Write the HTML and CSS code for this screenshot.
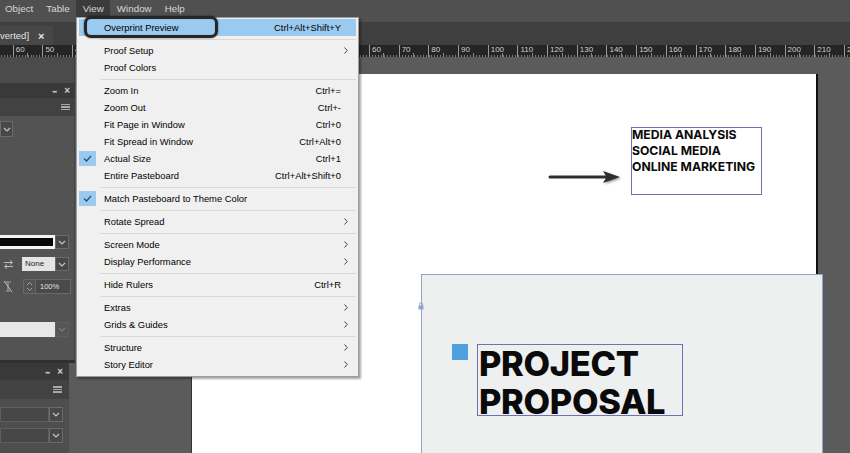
FILE: index.html
```html
<!DOCTYPE html>
<html>
<head>
<meta charset="utf-8">
<title>View menu</title>
<link rel="stylesheet" href="styles.css">
</head>
<body>
<div class="app">
  <div class="menubar">
    <span class="mb-item">Object</span>
    <span class="mb-item">Table</span>
    <span class="mb-item active">View</span>
    <span class="mb-item">Window</span>
    <span class="mb-item">Help</span>
  </div>
  <div class="tabbar">
    <div class="doc-tab"><span class="doc-title">verted]</span><span class="doc-close">×</span></div>
  </div>
  <div class="ruler">
    <div class="ruler-track">
      <span class="rc"></span><span class="rc">60</span><span class="rc">50</span><span class="rc">40</span><span class="rc"></span><span class="rc"></span><span class="rc"></span><span class="rc"></span><span class="rc"></span><span class="rc"></span><span class="rc"></span><span class="rc"></span><span class="rc"></span><span class="rc">60</span><span class="rc">70</span><span class="rc">80</span><span class="rc">90</span><span class="rc">100</span><span class="rc">110</span><span class="rc">120</span><span class="rc">130</span><span class="rc">140</span><span class="rc">150</span><span class="rc">160</span><span class="rc">170</span><span class="rc">180</span><span class="rc">190</span><span class="rc">200</span><span class="rc">210</span><span class="rc">2</span>
    </div>
  </div>
  <div class="main">
    <aside class="panels">
      <div class="dock-strip"></div>
      <div class="panel-head">
        <span class="ph-collapse">◂◂</span><span class="ph-close">×</span>
      </div>
      <div class="panel-tabs"><span class="hamburger"><i></i><i></i><i></i></span></div>
      <div class="panel-body">
        <div class="row row1">
          <span class="chev-box"><svg width="8" height="5" viewBox="0 0 8 5"><path d="M1 1 L4 4 L7 1" fill="none" stroke="#c8c8c8" stroke-width="1.1"/></svg></span>
        </div>
        <div class="row rowA">
          <span class="stroke-field"><span class="stroke-bar"></span></span>
          <span class="chev-box"><svg width="8" height="5" viewBox="0 0 8 5"><path d="M1 1 L4 4 L7 1" fill="none" stroke="#c8c8c8" stroke-width="1.1"/></svg></span>
        </div>
        <div class="row rowB">
          <span class="ico"><svg width="11" height="9" viewBox="0 0 11 9"><path d="M1 2.5 H9 M7 0.5 L9.5 2.5 L7 4.5 M10 6.5 H2 M4 4.5 L1.5 6.5 L4 8.5" fill="none" stroke="#bdbdbd" stroke-width="1"/></svg></span>
          <span class="none-field">None</span>
          <span class="chev-box"><svg width="8" height="5" viewBox="0 0 8 5"><path d="M1 1 L4 4 L7 1" fill="none" stroke="#c8c8c8" stroke-width="1.1"/></svg></span>
        </div>
        <div class="row rowC">
          <span class="ico"><svg width="10" height="13" viewBox="0 0 10 13"><path d="M2 2 H8 M5 2 V11 M3 11 H7" fill="none" stroke="#9e9e9e" stroke-width="1.2"/><path d="M1 1 L9 12" stroke="#bdbdbd" stroke-width="1"/></svg></span>
          <span class="spin"><svg width="7" height="11" viewBox="0 0 7 11"><path d="M1 4 L3.5 1.5 L6 4 M1 7 L3.5 9.5 L6 7" fill="none" stroke="#aaa" stroke-width="0.9"/></svg></span>
          <span class="pct-field">100%</span>
        </div>
        <div class="row rowD">
          <span class="light-field"></span>
          <span class="chev-box dim"><svg width="8" height="5" viewBox="0 0 8 5"><path d="M1 1 L4 4 L7 1" fill="none" stroke="#7c7c7c" stroke-width="1.1"/></svg></span>
        </div>
      </div>
      <div class="panel-sep"></div>
      <div class="lower">
        <div class="lower-panel">
          <div class="panel-head lower-head">
            <span class="ph-collapse">◂◂</span><span class="ph-close">×</span>
          </div>
          <div class="panel-tabs lower-tabs"><span class="hamburger"><i></i><i></i><i></i></span></div>
          <div class="lower-body">
            <div class="lrow"><span class="dark-field"></span><span class="chev-box"><svg width="8" height="5" viewBox="0 0 8 5"><path d="M1 1 L4 4 L7 1" fill="none" stroke="#c8c8c8" stroke-width="1.1"/></svg></span></div>
            <div class="lrow"><span class="dark-field"></span><span class="chev-box"><svg width="8" height="5" viewBox="0 0 8 5"><path d="M1 1 L4 4 L7 1" fill="none" stroke="#c8c8c8" stroke-width="1.1"/></svg></span></div>
          </div>
        </div>
      </div>
    </aside>
    <div class="canvas">
      <div class="page"></div>
      <div class="bg-rect"></div>
      <svg class="lock" width="6" height="8" viewBox="0 0 6 8"><path d="M1.5 3.5 V2.2 A1.5 1.5 0 0 1 4.5 2.2 V3.5" fill="none" stroke="#8ea4cc" stroke-width="0.9"/><rect x="0.5" y="3.5" width="5" height="4" fill="#8ea4cc"/></svg>
      <div class="blue-square"></div>
      <div class="frame frame-title"><p>PROJECT</p><p>PROPOSAL</p></div>
      <div class="frame frame-list"><p>MEDIA ANALYSIS</p><p>SOCIAL MEDIA</p><p>ONLINE MARKETING</p></div>
      <svg class="arrow" width="76" height="16" viewBox="0 0 76 16">
        <defs><filter id="blur" x="-10%" y="-50%" width="120%" height="200%"><feGaussianBlur stdDeviation="1"/></filter></defs>
        <path d="M3 9.5 H64" stroke="#9a9a9a" stroke-width="4" stroke-linecap="round" filter="url(#blur)"/>
        <path d="M58 3.5 L74 9.5 L58 15 L61 9.5 Z" fill="#9a9a9a" filter="url(#blur)"/>
        <path d="M3 8 H62" stroke="#2e2e2e" stroke-width="3" stroke-linecap="round"/>
        <path d="M56 2 L73 8 L56 14 L59.5 8 Z" fill="#2e2e2e"/>
      </svg>
    </div>
  </div>

  <div class="view-menu">
    <div class="mi hl"><span class="ck"></span><span class="lbl">Overprint Preview</span><span class="sc">Ctrl+Alt+Shift+Y</span><span class="sub"></span></div>
    <div class="sep"></div>
    <div class="mi"><span class="ck"></span><span class="lbl">Proof Setup</span><span class="sc"></span><span class="sub"><svg width="4" height="7" viewBox="0 0 4 7"><path d="M0.5 0.5 L3.3 3.5 L0.5 6.5" fill="none" stroke="#333" stroke-width="0.9"/></svg></span></div>
    <div class="mi"><span class="ck"></span><span class="lbl">Proof Colors</span><span class="sc"></span><span class="sub"></span></div>
    <div class="sep"></div>
    <div class="mi"><span class="ck"></span><span class="lbl">Zoom In</span><span class="sc">Ctrl+=</span><span class="sub"></span></div>
    <div class="mi"><span class="ck"></span><span class="lbl">Zoom Out</span><span class="sc">Ctrl+-</span><span class="sub"></span></div>
    <div class="mi"><span class="ck"></span><span class="lbl">Fit Page in Window</span><span class="sc">Ctrl+0</span><span class="sub"></span></div>
    <div class="mi"><span class="ck"></span><span class="lbl">Fit Spread in Window</span><span class="sc">Ctrl+Alt+0</span><span class="sub"></span></div>
    <div class="mi"><span class="ck on"><svg width="9" height="7" viewBox="0 0 9 7"><path d="M1 3.5 L3.5 6 L8 1" fill="none" stroke="#2d4f73" stroke-width="1.3"/></svg></span><span class="lbl">Actual Size</span><span class="sc">Ctrl+1</span><span class="sub"></span></div>
    <div class="mi"><span class="ck"></span><span class="lbl">Entire Pasteboard</span><span class="sc">Ctrl+Alt+Shift+0</span><span class="sub"></span></div>
    <div class="sep"></div>
    <div class="mi"><span class="ck on"><svg width="9" height="7" viewBox="0 0 9 7"><path d="M1 3.5 L3.5 6 L8 1" fill="none" stroke="#2d4f73" stroke-width="1.3"/></svg></span><span class="lbl">Match Pasteboard to Theme Color</span><span class="sc"></span><span class="sub"></span></div>
    <div class="sep"></div>
    <div class="mi"><span class="ck"></span><span class="lbl">Rotate Spread</span><span class="sc"></span><span class="sub"><svg width="4" height="7" viewBox="0 0 4 7"><path d="M0.5 0.5 L3.3 3.5 L0.5 6.5" fill="none" stroke="#333" stroke-width="0.9"/></svg></span></div>
    <div class="sep"></div>
    <div class="mi"><span class="ck"></span><span class="lbl">Screen Mode</span><span class="sc"></span><span class="sub"><svg width="4" height="7" viewBox="0 0 4 7"><path d="M0.5 0.5 L3.3 3.5 L0.5 6.5" fill="none" stroke="#333" stroke-width="0.9"/></svg></span></div>
    <div class="mi"><span class="ck"></span><span class="lbl">Display Performance</span><span class="sc"></span><span class="sub"><svg width="4" height="7" viewBox="0 0 4 7"><path d="M0.5 0.5 L3.3 3.5 L0.5 6.5" fill="none" stroke="#333" stroke-width="0.9"/></svg></span></div>
    <div class="sep"></div>
    <div class="mi"><span class="ck"></span><span class="lbl">Hide Rulers</span><span class="sc">Ctrl+R</span><span class="sub"></span></div>
    <div class="sep"></div>
    <div class="mi"><span class="ck"></span><span class="lbl">Extras</span><span class="sc"></span><span class="sub"><svg width="4" height="7" viewBox="0 0 4 7"><path d="M0.5 0.5 L3.3 3.5 L0.5 6.5" fill="none" stroke="#333" stroke-width="0.9"/></svg></span></div>
    <div class="mi"><span class="ck"></span><span class="lbl">Grids &amp; Guides</span><span class="sc"></span><span class="sub"><svg width="4" height="7" viewBox="0 0 4 7"><path d="M0.5 0.5 L3.3 3.5 L0.5 6.5" fill="none" stroke="#333" stroke-width="0.9"/></svg></span></div>
    <div class="sep"></div>
    <div class="mi"><span class="ck"></span><span class="lbl">Structure</span><span class="sc"></span><span class="sub"><svg width="4" height="7" viewBox="0 0 4 7"><path d="M0.5 0.5 L3.3 3.5 L0.5 6.5" fill="none" stroke="#333" stroke-width="0.9"/></svg></span></div>
    <div class="mi"><span class="ck"></span><span class="lbl">Story Editor</span><span class="sc"></span><span class="sub"><svg width="4" height="7" viewBox="0 0 4 7"><path d="M0.5 0.5 L3.3 3.5 L0.5 6.5" fill="none" stroke="#333" stroke-width="0.9"/></svg></span></div>
    <div class="callout"></div>
  </div>
</div>
</body>
</html>
```

FILE: styles.css
```css
* { box-sizing: border-box; margin: 0; padding: 0; }
html, body { width: 850px; height: 453px; overflow: hidden; }
body { background: #5c5c5c; font-family: "Liberation Sans", Arial, sans-serif; }

.app { position: relative; width: 850px; height: 453px; overflow: hidden; display: flex; flex-direction: column; }

/* menu bar */
.menubar { height: 22px; flex: none; background: #505050; display: flex; align-items: flex-start; color: #d8d8d8; font-size: 9.8px; }
.mb-item { height: 17px; line-height: 17px; padding: 0 6.5px; }
.mb-item:first-child { padding-left: 5px; }
.mb-item.active { background: #3b3b3b; }

/* document tabs */
.tabbar { height: 23px; flex: none; background: #3f3f3f; display: flex; align-items: flex-end; }
.doc-tab { height: 19px; width: 53px; background: #474747; display: flex; align-items: center; color: #e2e2e2; font-size: 9.5px; }
.doc-close { margin-left: 9px; font-size: 11px; font-weight: bold; color: #e6e6e6; }

/* ruler */
.ruler { height: 12px; flex: none; background: #252525; overflow: hidden; }
.ruler-track {
  display: flex; margin-left: -17px; width: 900px; height: 12px;
  background-image:
    repeating-linear-gradient(90deg, transparent 0 14.35px, #8d8d8d 14.35px 15.35px, transparent 15.35px 29.7px),
    repeating-linear-gradient(90deg, #7a7a7a 0 1px, transparent 1px 2.97px);
  background-size: 100% 4px, 100% 2px;
  background-position: left bottom, left bottom;
  background-repeat: no-repeat;
}
.rc { flex: none; width: 29.7px; height: 12px; border-left: 1px solid #9a9a9a; color: #cfcfcf; font-size: 8px; line-height: 9px; padding-left: 2px; overflow: hidden; white-space: nowrap; }

/* main area */
.main { flex: 1; display: flex; min-height: 0; }
.panels { width: 75px; flex: none; display: flex; flex-direction: column; background: #5a5a5a; }
.dock-strip { height: 26px; background: #4b4b4b; border-right: 1px solid #3e3e3e; }
.panel-head { height: 15px; background: #393939; display: flex; align-items: center; justify-content: flex-end; padding-right: 5px; color: #d0d0d0; }
.ph-collapse { font-size: 5px; letter-spacing: -1px; margin-right: 8px; }
.ph-close { font-size: 10px; font-weight: bold; line-height: 10px; }
.panel-tabs { height: 18px; background: #424242; display: flex; align-items: center; justify-content: flex-end; padding-right: 5px; }
.hamburger { display: flex; flex-direction: column; gap: 1px; width: 9px; }
.hamburger i { display: block; height: 1.5px; background: #a8a8a8; }

.panel-body { height: 244px; background: #535353; border-right: 1px solid #444; display: flex; flex-direction: column; }
.row { display: flex; align-items: stretch; }
.row1 { margin-top: 5px; height: 16px; }
.rowA { margin-top: 98px; height: 14px; }
.rowB { margin-top: 8px; height: 14px; }
.rowC { margin-top: 8px; height: 15px; }
.rowD { margin-top: 28px; height: 15px; }

.chev-box { width: 14px; border: 1px solid #6a6a6a; background: #484848; display: flex; align-items: center; justify-content: center; }
.row1 .chev-box { width: 13px; }
.chev-box.dim { background: #555; border-color: #5e5e5e; }
.stroke-field { width: 55px; background: #f2f2f2; padding: 3px 2px 3px 0; display: flex; }
.stroke-bar { flex: 1; background: #050505; }
.ico { width: 22px; display: flex; align-items: center; justify-content: center; padding-right: 6px; }
.none-field { width: 33px; background: #e4e4e4; color: #222; font-size: 8px; line-height: 14px; padding-left: 3px; }
.spin { width: 13px; margin-left: 1px; border: 1px solid #686868; display: flex; align-items: center; justify-content: center; }
.pct-field { width: 35px; border: 1px solid #686868; border-left: none; background: #4a4a4a; color: #e0e0e0; font-size: 7.5px; line-height: 13px; padding-left: 4px; }
.light-field { width: 55px; background: #e7e7e7; }

.panel-sep { height: 3px; background: #303030; }
.lower { flex: 1; display: flex; }
.lower-panel { width: 69px; background: #4e4e4e; display: flex; flex-direction: column; }
.lower-head { height: 17px; padding-right: 6px; }
.lower-tabs { height: 19px; padding-right: 7px; }
.lower-body { display: flex; flex-direction: column; gap: 6px; padding-top: 8px; }
.lrow { display: flex; height: 15px; }
.dark-field { width: 49px; background: #474747; border: 1px solid #5f5f5f; }
.lrow .chev-box { width: 14px; }

/* canvas */
.canvas { flex: 1; position: relative; background: #5b5b5b; overflow: hidden; }
.page { position: absolute; left: 116px; top: 17px; width: 627px; height: 400px; background: #fff; border-left: 1px solid #333; border-right: 2px solid #111; }
.bg-rect { position: absolute; left: 346px; top: 217px; width: 402px; height: 200px; background: #eeefef; border: 1px solid #8fa5cf; }
.lock { position: absolute; left: 343px; top: 245px; }
.blue-square { position: absolute; left: 377px; top: 287px; width: 16px; height: 16px; background: #4ca2dc; }
.frame { position: absolute; border: 1px solid #6f70b6; font-family: Inter, "Liberation Sans", sans-serif; color: #0a0a0a; }
.frame-title { left: 402px; top: 287px; width: 206px; height: 72px; font-size: 34.4px; font-weight: 800; line-height: 38px; padding-left: 1px; letter-spacing: -0.3px; }
.frame-list { left: 556px; top: 70px; width: 131px; height: 68px; font-size: 12.2px; font-weight: 700; line-height: 16px; }
.frame-list p:first-child { margin-top: -1px; }
.arrow { position: absolute; left: 472px; top: 112px; }

/* view menu */
.view-menu { position: absolute; left: 76px; top: 17px; width: 283px; height: 360px; background: #f0f0f0; border: 1px solid #9c9c9c; box-shadow: 2px 2px 2px rgba(0,0,0,0.35); padding-top: 1px; font-size: 9.4px; color: #000; }
.mi { height: 17px; margin: 0 2px; display: flex; align-items: center; }
.mi.hl { background: #9bcaf1; }
.ck { width: 17px; height: 15px; margin-right: 8px; display: flex; align-items: center; justify-content: center; }
.ck.on { background: #9bcaf1; }
.lbl { flex: 1; white-space: nowrap; }
.sc { white-space: nowrap; }
.sub { width: 15px; display: flex; align-items: center; padding-left: 3px; }
.sep { height: 6px; margin: 0 2px 0 23px; display: flex; align-items: center; }
.sep::before { content: ""; flex: 1; height: 1px; background: #d9d9d9; }
.callout { position: absolute; left: 7px; top: -2px; width: 134px; height: 22px; border: 3px solid #262626; border-radius: 7px; box-shadow: 0 0 2px rgba(0,0,0,0.6), inset 0 0 1px rgba(0,0,0,0.4); }
```
